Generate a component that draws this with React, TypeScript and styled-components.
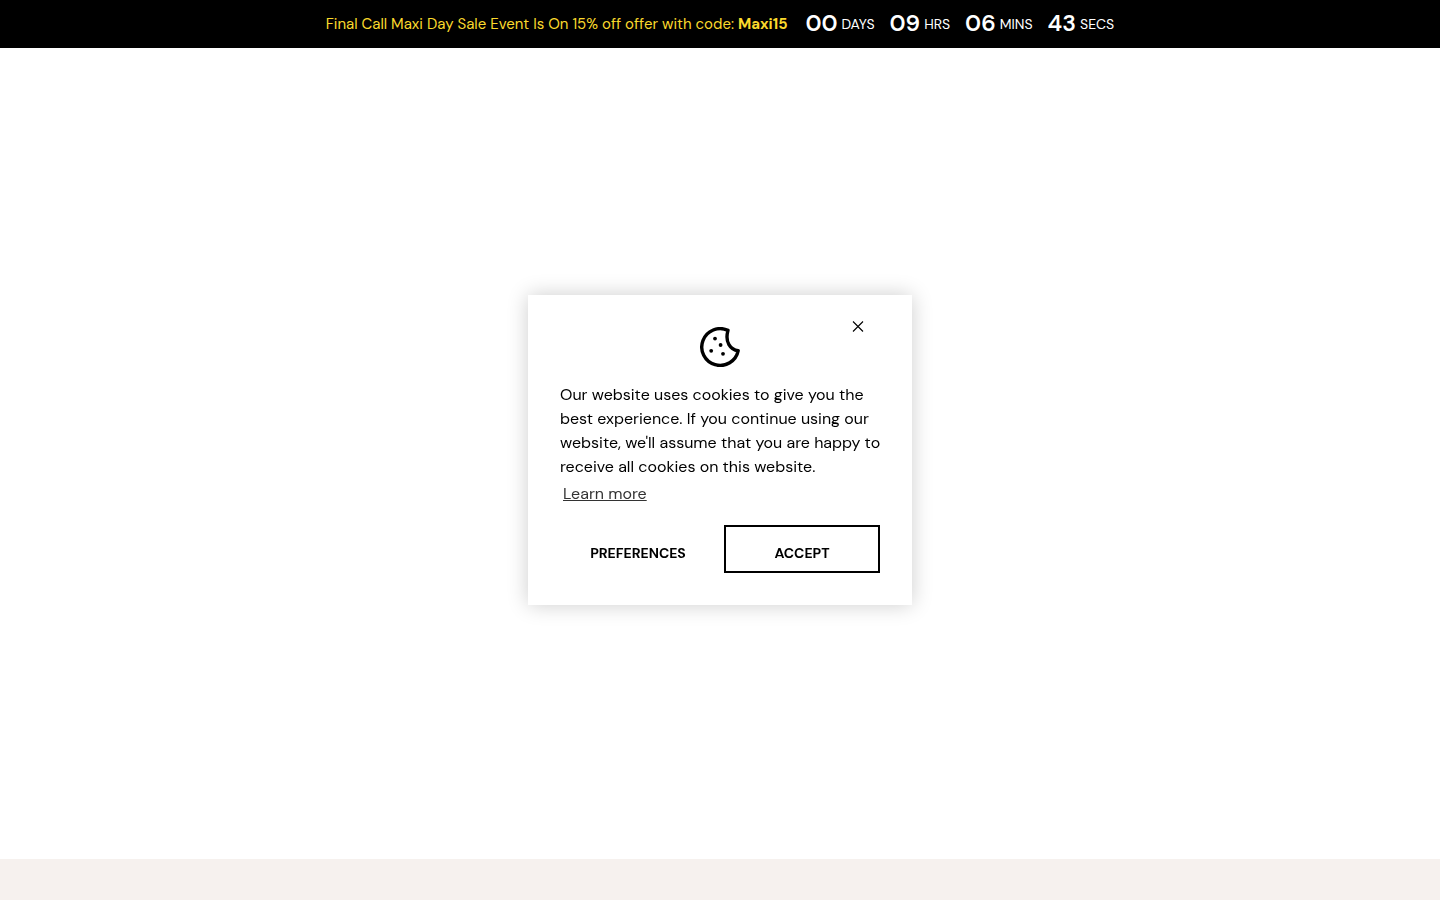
import React from "react";
import styled, { createGlobalStyle } from "styled-components";

const GlobalStyle = createGlobalStyle`
  *, *::before, *::after { box-sizing: border-box; }
  body {
    margin: 0;
    background: #fff;
    color: #000;
    font-family: "DM Sans", Inter, "Liberation Sans", sans-serif;
    font-size: 16px;
    line-height: 24px;
  }
`;

const Page = styled.div`
  display: flex;
  flex-direction: column;
  min-height: 100vh;
`;

const SaleBar = styled.header`
  display: flex;
  flex-wrap: wrap;
  align-items: center;
  justify-content: center;
  column-gap: 18px;
  min-height: 48px;
  padding: 0 16px;
  background: #000;
  color: #fff;
`;

const SaleText = styled.p`
  margin: 0;
  font-size: 15px;
  color: #fbd92c;
`;

const Countdown = styled.div`
  display: flex;
  gap: 15px;
`;

const Unit = styled.span`
  display: flex;
  align-items: center;
  gap: 4px;
  font-size: 14px;
`;

const UnitValue = styled.span`
  padding-bottom: 2px;
  font-size: 23px;
  font-weight: 600;
  line-height: 22px;
`;

const Main = styled.main`
  flex: 1;
`;

const FooterBand = styled.footer`
  height: 41px;
  background: #f6f1ee;
`;

const Overlay = styled.div`
  position: fixed;
  inset: 0;
  display: flex;
  align-items: center;
  justify-content: center;
  padding: 16px;
`;

const Dialog = styled.section`
  position: relative;
  width: 100%;
  max-width: 384px;
  padding: 32px;
  background: #fff;
  box-shadow: 0 0 20px rgba(0, 0, 0, 0.2);
`;

const CloseButton = styled.button`
  position: absolute;
  top: 20px;
  right: 42px;
  display: flex;
  align-items: center;
  justify-content: center;
  width: 24px;
  height: 24px;
  padding: 0;
  border: 0;
  background: none;
  color: #000;
  cursor: pointer;
`;

const CookieIcon = styled.svg`
  display: block;
  margin: 0 auto 16px;
`;

const Message = styled.p`
  margin: 0 -4px 0 0;
`;

const LearnMore = styled.a`
  display: block;
  width: fit-content;
  margin: 3px 0 19px 3px;
  color: #333;
  text-decoration: underline;
`;

const Actions = styled.div`
  display: grid;
  grid-template-columns: 1fr 1fr;
  gap: 8px;
`;

const ActionButton = styled.button<{ $outlined?: boolean }>`
  height: 48px;
  padding: 8px 0 0;
  border: 2px solid ${(p) => (p.$outlined ? "#000" : "transparent")};
  background: transparent;
  color: #000;
  font: inherit;
  font-size: 14px;
  font-weight: 700;
  text-transform: uppercase;
  cursor: pointer;
`;

const remaining = [
  { value: "00", label: "DAYS" },
  { value: "09", label: "HRS" },
  { value: "06", label: "MINS" },
  { value: "43", label: "SECS" },
];

export default function App() {
  return (
    <>
      <GlobalStyle />
      <Page>
        <SaleBar>
          <SaleText>
            Final Call Maxi Day Sale Event Is On 15% off offer with code: <strong>Maxi15</strong>
          </SaleText>
          <Countdown>
            {remaining.map(({ value, label }) => (
              <Unit key={label}>
                <UnitValue>{value}</UnitValue>
                {label}
              </Unit>
            ))}
          </Countdown>
        </SaleBar>
        <Main />
        <FooterBand />
      </Page>
      <Overlay>
        <Dialog role="dialog" aria-labelledby="cookie-message">
          <CloseButton type="button" aria-label="Close">
            <svg width="12" height="12" viewBox="0 0 12 12" stroke="currentColor" strokeWidth="1.1" aria-hidden="true">
              <path d="M1 .5 11 10.5M11 .5 1 10.5" />
            </svg>
          </CloseButton>
          <CookieIcon width="40" height="40" viewBox="0 0 40 40" aria-hidden="true">
            <path
              d="M28 3.4A18.4 18.4 0 1 0 38.2 23.7C30.5 22.8 24.6 15.2 28 3.4Z"
              fill="none"
              stroke="#000"
              strokeWidth="3.4"
              strokeLinejoin="round"
            />
            <circle cx="15" cy="11.6" r="1.9" />
            <circle cx="20.6" cy="18" r="1.9" />
            <circle cx="11.2" cy="23.8" r="1.9" />
            <circle cx="23" cy="26.8" r="1.9" />
          </CookieIcon>
          <Message id="cookie-message">
            Our website uses cookies to give you the best experience. If you continue using our
            website, we'll assume that you are happy to receive all cookies on this website.
          </Message>
          <LearnMore href="#cookies">Learn more</LearnMore>
          <Actions>
            <ActionButton type="button">Preferences</ActionButton>
            <ActionButton type="button" $outlined>
              Accept
            </ActionButton>
          </Actions>
        </Dialog>
      </Overlay>
    </>
  );
}
